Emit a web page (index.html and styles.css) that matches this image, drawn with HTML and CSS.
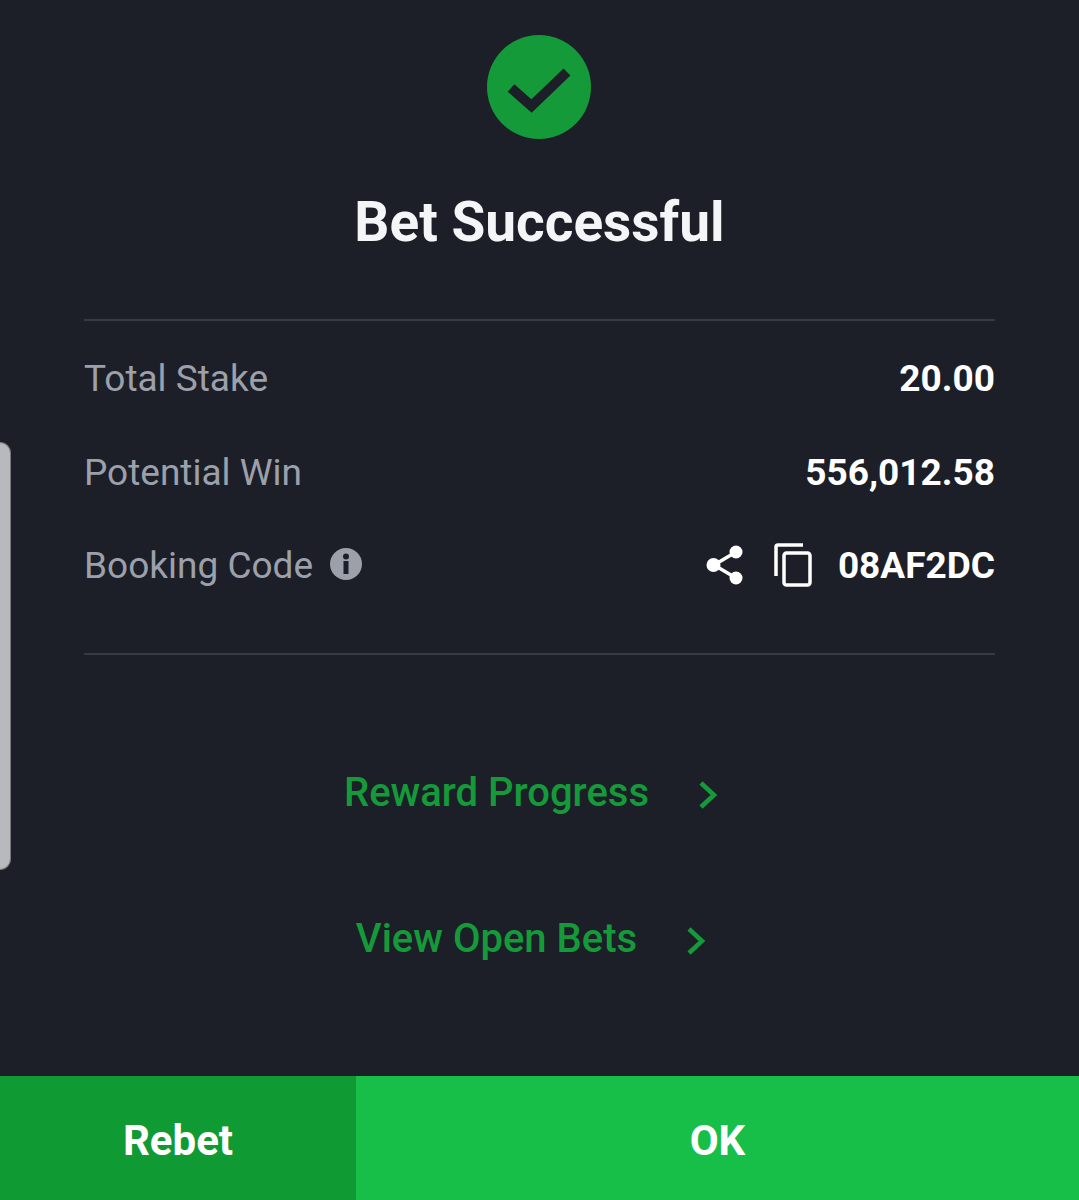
FILE: index.html
```html
<!DOCTYPE html>
<html lang="en">
<head>
  <meta charset="UTF-8">
  <title>Bet Successful</title>
  <meta name="viewport" content="width=device-width, initial-scale=1">
  <link rel="stylesheet" href="styles.css">
</head>
<body>
  <div class="side-handle"></div>

  <main class="result">
    <div class="status-icon">
      <svg viewBox="0 0 104 104" width="104" height="104">
        <circle cx="52" cy="52" r="52" fill="#159a39"/>
        <path d="M24 53 L44.500 71 L80 37" fill="none" stroke="#1c1f28" stroke-width="10"/>
      </svg>
    </div>
    <h1>Bet Successful</h1>

    <section class="summary">
      <div class="row">
        <span class="label">Total Stake</span>
        <span class="value">20.00</span>
      </div>
      <div class="row">
        <span class="label">Potential Win</span>
        <span class="value">556,012.58</span>
      </div>
      <div class="row">
        <span class="label">Booking Code
          <svg class="info" viewBox="0 0 32 32" width="32" height="32">
            <circle cx="16" cy="16" r="16" fill="#9ca0ab"/>
            <circle cx="16" cy="8.500" r="3" fill="#1c1f28"/>
            <rect x="13.500" y="13" width="5" height="13" fill="#1c1f28"/>
          </svg>
        </span>
        <span class="code">
          <svg class="share" viewBox="0 0 38 40" width="38" height="40">
            <path d="M30 7 L8 20 L30 33" fill="none" stroke="#fff" stroke-width="3.500"/>
            <circle cx="30" cy="7" r="6.500" fill="#fff"/>
            <circle cx="7.500" cy="20" r="7" fill="#fff"/>
            <circle cx="30" cy="33" r="6.500" fill="#fff"/>
          </svg>
          <svg class="copy" viewBox="0 0 39 44" width="39" height="44">
            <path d="M29 2 H4 Q2 2 2 4 V33" fill="none" stroke="#fff" stroke-width="3.500"/>
            <rect x="10" y="10" width="26" height="32" rx="2.500" fill="none" stroke="#fff" stroke-width="3.500"/>
          </svg>
          <span class="value">08AF2DC</span>
        </span>
      </div>
    </section>

    <nav class="links">
      <a class="link" href="#">Reward Progress
        <svg viewBox="0 0 20 30" width="20" height="30"><path d="M3 3 L16 15 L3 27" fill="none" stroke="#159a39" stroke-width="4.500"/></svg>
      </a>
      <a class="link" href="#">View Open Bets
        <svg viewBox="0 0 20 30" width="20" height="30"><path d="M3 3 L16 15 L3 27" fill="none" stroke="#159a39" stroke-width="4.500"/></svg>
      </a>
    </nav>

    <div class="actions">
      <button class="btn btn-rebet">Rebet</button>
      <button class="btn btn-ok">OK</button>
    </div>
  </main>
</body>
</html>
```

FILE: styles.css
```css
* {
  box-sizing: border-box;
}
body {
  margin: 0;
  background: #1c1f28;
  font-family: Roboto, sans-serif;
  color: #fff;
}
.result {
  height: 1200px;
  display: flex;
  flex-direction: column;
  align-items: center;
  padding-top: 35px;
}
.status-icon {
  height: 104px;
  margin-right: 2px;
}
.status-icon svg {
  display: block;
}
h1 {
  margin: 47px 0 0;
  font-size: 55px;
  line-height: 72px;
  font-weight: 700;
  color: #f4f5f6;
}
.summary {
  width: 911px;
  margin-top: 61px;
  padding: 11px 0 40px;
  border-top: 2px solid #373a43;
  border-bottom: 2px solid #373a43;
  display: flex;
  flex-direction: column;
}
.row {
  height: 93.500px;
  display: flex;
  justify-content: space-between;
  align-items: center;
}
.label {
  display: flex;
  align-items: center;
  gap: 17px;
  font-size: 37px;
  color: #9ca0ab;
}
.info {
  margin-top: -4px;
}
.value {
  font-size: 37px;
  font-weight: 700;
  color: #fff;
}
.code {
  display: flex;
  align-items: center;
}
.share {
  margin: -2px 30px 0 0;
}
.copy {
  margin: -2px 25px 0 0;
}
.links {
  display: flex;
  flex-direction: column;
  align-items: center;
  gap: 74px;
  margin-top: 102px;
}
.link {
  height: 72px;
  display: flex;
  align-items: center;
  gap: 49px;
  font-size: 40px;
  font-weight: 500;
  color: #159a39;
  text-decoration: none;
}
.link svg {
  margin: 4px 17px 0 0;
}
.actions {
  margin-top: auto;
  width: 100%;
  height: 124px;
  display: flex;
}
.btn {
  border: none;
  padding: 4px 0 0;
  font-family: inherit;
  font-size: 42px;
  font-weight: 700;
  color: #fff;
}
.btn-rebet {
  width: 356px;
  background: #0f9a34;
}
.btn-ok {
  flex: 1;
  background: #17bf48;
}
.side-handle {
  position: absolute;
  left: 0;
  top: 442px;
  width: 11px;
  height: 428px;
  background: #b7b9bc;
  border: 1px solid #77797e;
  border-left: none;
  border-radius: 0 12px 12px 0;
}
```
